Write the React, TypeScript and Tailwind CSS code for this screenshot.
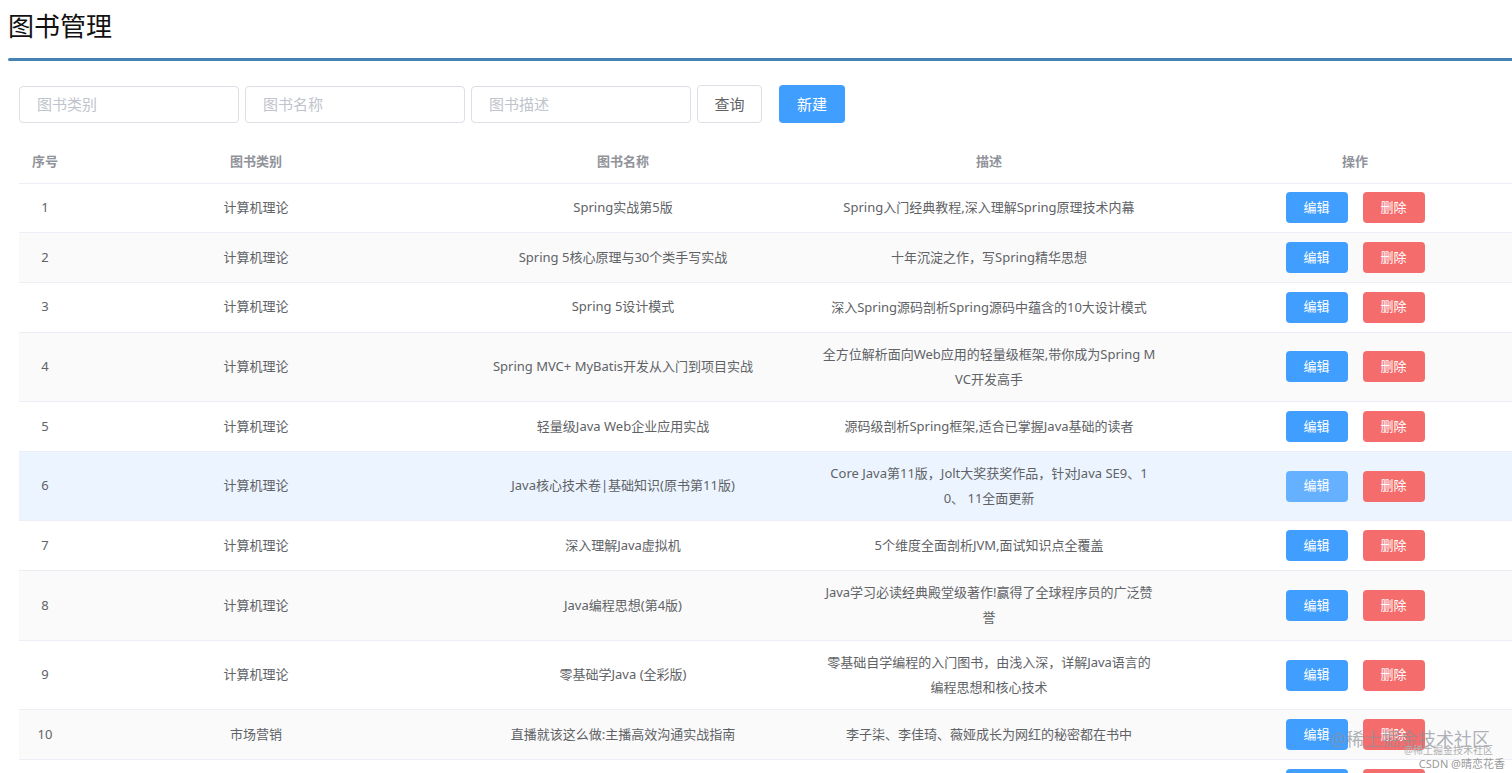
import React from "react"

interface Book {
  id: number
  category: string
  name: string
  desc: string[]
}

const books: Book[] = [
  { id: 1, category: "计算机理论", name: "Spring实战第5版", desc: ["Spring入门经典教程,深入理解Spring原理技术内幕"] },
  { id: 2, category: "计算机理论", name: "Spring 5核心原理与30个类手写实战", desc: ["十年沉淀之作，写Spring精华思想"] },
  { id: 3, category: "计算机理论", name: "Spring 5设计模式", desc: ["深入Spring源码剖析Spring源码中蕴含的10大设计模式"] },
  {
    id: 4,
    category: "计算机理论",
    name: "Spring MVC+ MyBatis开发从入门到项目实战",
    desc: ["全方位解析面向Web应用的轻量级框架,带你成为Spring M", "VC开发高手"],
  },
  { id: 5, category: "计算机理论", name: "轻量级Java Web企业应用实战", desc: ["源码级剖析Spring框架,适合已掌握Java基础的读者"] },
  {
    id: 6,
    category: "计算机理论",
    name: "Java核心技术卷|基础知识(原书第11版)",
    desc: ["Core Java第11版，Jolt大奖获奖作品，针对Java SE9、1", "0、 11全面更新"],
  },
  { id: 7, category: "计算机理论", name: "深入理解Java虚拟机", desc: ["5个维度全面剖析JVM,面试知识点全覆盖"] },
  {
    id: 8,
    category: "计算机理论",
    name: "Java编程思想(第4版)",
    desc: ["Java学习必读经典殿堂级著作!赢得了全球程序员的广泛赞", "誉"],
  },
  {
    id: 9,
    category: "计算机理论",
    name: "零基础学Java (全彩版)",
    desc: ["零基础自学编程的入门图书，由浅入深，详解Java语言的", "编程思想和核心技术"],
  },
  { id: 10, category: "市场营销", name: "直播就该这么做:主播高效沟通实战指南", desc: ["李子柒、李佳琦、薇娅成长为网红的秘密都在书中"] },
]

const font = { fontFamily: '"Noto Sans", "Noto Sans CJK SC", sans-serif' }

function BookRow({ book, index }: { book: Book; index: number }) {
  const hovered = book.id === 6
  const striped = index % 2 === 1
  const bg = hovered ? "bg-[#ecf5ff]" : striped ? "bg-[#fafafa]" : "bg-white"
  const height = book.desc.length > 1 ? "h-[69.6px]" : "h-[49.7px]"

  return (
    <tr className={`${bg} ${height} border-b border-[#ebeef5]`}>
      <td className="text-center">{book.id}</td>
      <td className="text-center">{book.category}</td>
      <td className="text-center">{book.name}</td>
      <td className="text-center leading-[25px] whitespace-nowrap">
        {book.desc.map((line, i) => (
          <div key={i}>{line}</div>
        ))}
      </td>
      <td>
        <div className="flex items-center justify-center gap-[15px]">
          <button
            className={`h-[31px] w-[62px] rounded-[4px] text-[13px] text-white ${
              hovered ? "bg-[#66b1ff]" : "bg-[#409eff]"
            }`}
          >
            编辑
          </button>
          <button className="h-[31px] w-[62px] rounded-[4px] bg-[#f56c6c] text-[13px] text-white">删除</button>
        </div>
      </td>
    </tr>
  )
}

export default function App() {
  return (
    <div className="relative h-screen w-screen overflow-hidden bg-white" style={font}>
      <div className="w-[1560px] pl-[8px]">
        <h1 className="mt-[8px] text-[26px] leading-[36px] font-normal text-[#111]">图书管理</h1>
        <div className="mt-[14px] h-[3px] rounded-l-[2px] bg-[#4682b4]" />

        <div className="pl-[11px]">
          {/* 查询栏 */}
          <div className="mt-[24px] flex items-center">
            <input
              className="h-[37px] w-[220px] rounded-[4px] border border-[#dcdfe6] px-[17px] text-[15px] text-[#606266] outline-none placeholder:text-[#c0c4cc]"
              placeholder="图书类别"
            />
            <input
              className="ml-[6px] h-[37px] w-[220px] rounded-[4px] border border-[#dcdfe6] px-[17px] text-[15px] text-[#606266] outline-none placeholder:text-[#c0c4cc]"
              placeholder="图书名称"
            />
            <input
              className="ml-[6px] h-[37px] w-[220px] rounded-[4px] border border-[#dcdfe6] px-[17px] text-[15px] text-[#606266] outline-none placeholder:text-[#c0c4cc]"
              placeholder="图书描述"
            />
            <button className="ml-[6px] h-[38px] w-[65px] rounded-[4px] border border-[#dcdfe6] bg-white text-[15px] text-[#606266]">
              查询
            </button>
            <button className="ml-[17px] h-[38px] w-[66px] rounded-[4px] bg-[#409eff] text-[15px] text-white">
              新建
            </button>
          </div>

          {/* 图书列表 */}
          <table className="mt-[17px] w-[1518px] table-fixed border-collapse text-[13px] text-[#606266]">
            <colgroup>
              <col className="w-[52px]" />
              <col className="w-[370px]" />
              <col className="w-[364px]" />
              <col className="w-[368px]" />
              <col className="w-[364px]" />
            </colgroup>
            <thead>
              <tr className="h-[43px] border-b border-[#ebeef5] text-[13px] font-bold text-[#909399]">
                <th>序号</th>
                <th>图书类别</th>
                <th>图书名称</th>
                <th>描述</th>
                <th>操作</th>
              </tr>
            </thead>
            <tbody>
              {books.map((book, index) => (
                <BookRow key={book.id} book={book} index={index} />
              ))}
              {/* 下一行只露出按钮顶部 */}
              <tr className="h-[49.7px] bg-white">
                <td />
                <td />
                <td />
                <td />
                <td>
                  <div className="flex items-center justify-center gap-[15px]">
                    <span className="block h-[31px] w-[62px] rounded-[4px] bg-[#409eff]" />
                    <span className="block h-[31px] w-[62px] rounded-[4px] bg-[#f56c6c]" />
                  </div>
                </td>
              </tr>
            </tbody>
          </table>
        </div>
      </div>

      {/* 水印 */}
      <div className="pointer-events-none absolute right-[7px] bottom-[4px] flex flex-col items-end leading-none">
        <span className="mr-[15px] text-[18px] text-[#8a9099]/70">@稀土掘金技术社区</span>
        <span className="mr-[12px] mt-[-3px] text-[10px] text-[#b0b0b0]">@稀土掘金技术社区</span>
        <span className="mt-[3px] text-[11px] text-[#9a9a9a]">CSDN @晴恋花香</span>
      </div>
    </div>
  )
}
